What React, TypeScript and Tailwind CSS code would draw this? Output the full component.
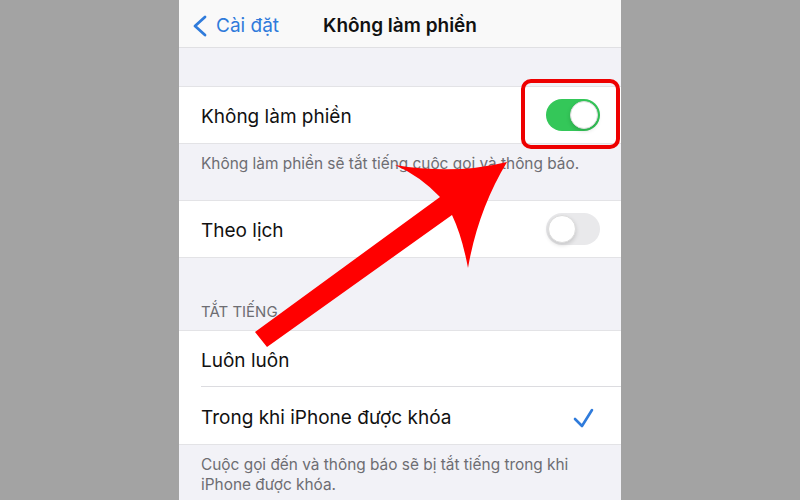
const Toggle = ({ on }: { on: boolean }) => (
  <div
    className={
      on
        ? "w-[54px] h-[32px] rounded-full bg-[#34c759] flex items-center justify-end p-[2px]"
        : "w-[54px] h-[32px] rounded-full bg-[#e9e9eb] flex items-center justify-start p-[2px]"
    }
  >
    <div className="w-[28px] h-[28px] rounded-full bg-white border border-[#dcdcdc] shadow-[0_2px_4px_rgba(0,0,0,0.15)]" />
  </div>
);

const Row = ({ children, divider = false }: { children: React.ReactNode; divider?: boolean }) => (
  <div className="relative h-[56px] bg-white flex items-center pl-[22px] pr-[21px] justify-between">
    {children}
    {divider && <div className="absolute left-[22px] right-0 bottom-0 h-px bg-[#dcdce0]" />}
  </div>
);

const Label = ({ children }: { children: React.ReactNode }) => (
  <span className="text-[19px] pt-[4px]">{children}</span>
);

export default function App() {
  return (
    <div className="relative w-[800px] h-[500px] overflow-hidden bg-[#a3a3a3] flex justify-center" style={{ fontFamily: "Inter, 'Noto Sans', sans-serif" }}>
      <div className="w-[442px] h-full bg-[#f2f2f7] flex flex-col text-[#111]">
        {/* nav bar */}
        <div className="h-[48px] bg-[#f9f9f9] border-b border-[#e0e0e3] flex items-center relative pt-[5px]">
          <div className="flex items-center text-[#2f7bdb] pl-[13px]">
            <svg width="16" height="22" viewBox="0 0 16 22" fill="none">
              <polyline points="13,2 3,11 13,20" stroke="#2f7bdb" strokeWidth="2.8" strokeLinecap="round" strokeLinejoin="round" />
            </svg>
            <span className="text-[19px] ml-[8px]">Cài đặt</span>
          </div>
          <div className="absolute left-0 right-0 text-center text-[19px] font-semibold pointer-events-none">Không làm phiền</div>
        </div>

        <div className="h-[38px] shrink-0" />

        <div className="border-y border-[#e3e3e6]">
          <Row>
            <Label>Không làm phiền</Label>
            <Toggle on />
          </Row>
        </div>
        <div className="h-[56px] shrink-0 pl-[22px] pt-[8px] text-[15.4px] text-[#6d6d72]">
          Không làm phiền sẽ tắt tiếng cuộc gọi và thông báo.
        </div>

        <div className="border-y border-[#e3e3e6]">
          <Row>
            <Label>Theo lịch</Label>
            <Toggle on={false} />
          </Row>
        </div>

        <div className="h-[72px] shrink-0 flex items-end pl-[22px] pb-[7px] text-[15px] text-[#6d6d72]">TẮT TIẾNG</div>

        <div className="border-y border-[#e3e3e6] flex flex-col gap-0">
          <Row divider>
            <Label>Luôn luôn</Label>
          </Row>
          <div className="h-px bg-white" />
          <Row>
            <Label>Trong khi iPhone được khóa</Label>
            <svg width="21" height="20" viewBox="0 0 21 20" fill="none" className="mr-[6px] mt-[3px]">
              <polyline points="2,11 9,18 19,2" stroke="#2f7bdb" strokeWidth="2.6" strokeLinecap="round" strokeLinejoin="round" />
            </svg>
          </Row>
        </div>

        <div className="pl-[22px] pr-[20px] pt-[10px] text-[15.4px] leading-[20px] text-[#6d6d72]">
          Cuộc gọi đến và thông báo sẽ bị tắt tiếng trong khi iPhone được khóa.
        </div>
      </div>

      {/* highlight around the switch and the pointer arrow */}
      <div className="absolute left-[521px] top-[79px] w-[99px] h-[70px] rounded-[10px] border-[4px] border-[#ee0000]" />
      <svg className="absolute left-0 top-0" width="800" height="500" viewBox="0 0 800 500">
        <path
          d="M255 332 L440 197 Q420 176 395 165 Q455 175 507 162 Q478 210 468 268 Q462 236 452 215 L267 347 Z"
          fill="#ff0000"
        />
      </svg>
    </div>
  );
}
